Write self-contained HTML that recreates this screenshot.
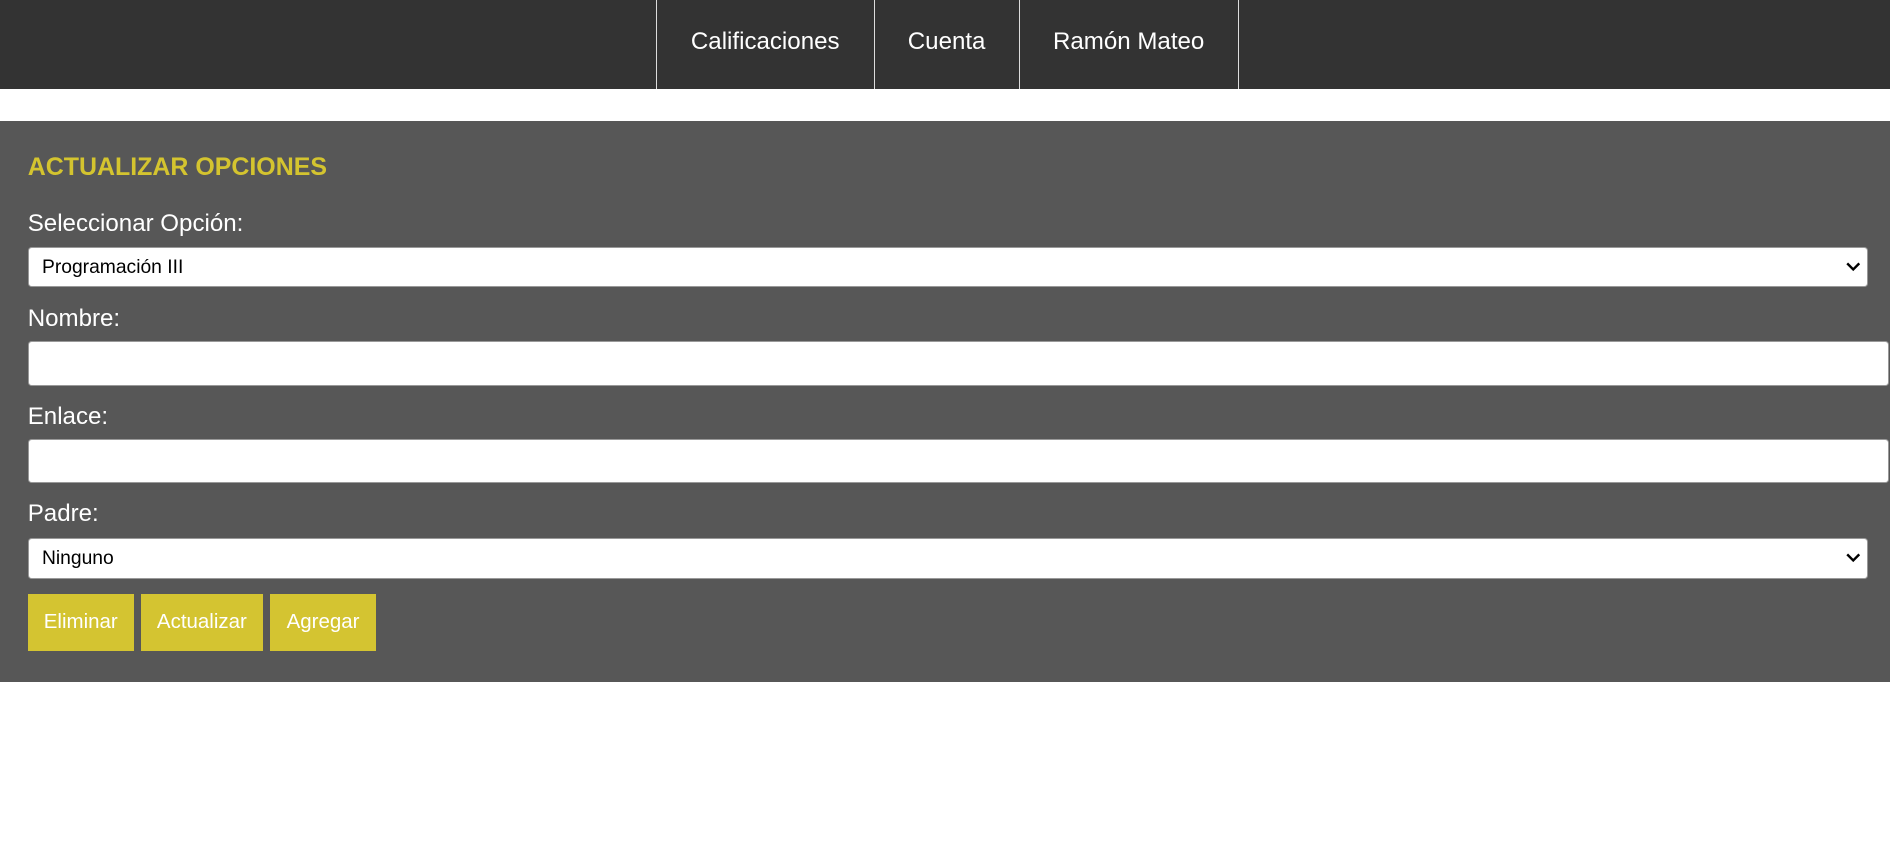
<!DOCTYPE html>
<html><head><meta charset="utf-8"><style>
html,body{margin:0;padding:0;background:#fff;}
body{zoom:1.2054;width:1568px;height:710px;overflow:hidden;font-family:"Liberation Sans",Arial,sans-serif;position:relative;}
.nav{position:absolute;left:0;top:0;width:1568px;height:74px;background:#333;}
.nav .it{position:absolute;top:0;height:74px;line-height:70px;color:#fff;font-size:20px;text-align:center;border-left:1px solid #ddd;}
.sec{position:absolute;left:0;top:100px;width:1568px;height:466px;background:#575757;}
h2{position:absolute;left:23px;top:127px;margin:0;font-size:20.7px;color:#d4c42f;font-weight:bold;}
.lbl{position:absolute;left:23px;color:#fff;font-size:20px;}
.sel,.inp{position:absolute;left:23px;background:#fff;border-radius:3px;box-sizing:border-box;border:1px solid #999;}
.sel{width:1527px;font-size:16px;color:#000;padding-left:11px;}
.inp{width:1544px;}
.chev{position:absolute;right:6px;top:50%;margin-top:-5px;}
.btn{position:absolute;top:493px;height:47px;line-height:47px;background:#d4c431;color:#fff;font-size:17px;text-align:center;}
</style></head><body>
<div class="nav">
<div class="it" style="left:544px;width:180px">Calificaciones</div>
<div class="it" style="left:725px;width:119px">Cuenta</div>
<div class="it" style="left:845px;width:181px">Ramón Mateo</div>
<div class="it" style="left:1027px;width:0"></div>
</div>
<div class="sec"></div>
<h2>ACTUALIZAR OPCIONES</h2>
<div class="lbl" style="top:174px">Seleccionar Opción:</div>
<div class="sel" style="top:205px;height:33px;line-height:33px">Programación III<svg class="chev" width="12" height="9" viewBox="0 0 12 9"><path d="M1 2 L6 7 L11 2" fill="none" stroke="#000" stroke-width="2"/></svg></div>
<div class="lbl" style="top:253px">Nombre:</div>
<div class="inp" style="top:283px;height:37px"></div>
<div class="lbl" style="top:334px">Enlace:</div>
<div class="inp" style="top:364px;height:37px"></div>
<div class="lbl" style="top:415px">Padre:</div>
<div class="sel" style="top:446px;height:34px;line-height:34px">Ninguno<svg class="chev" width="12" height="9" viewBox="0 0 12 9"><path d="M1 2 L6 7 L11 2" fill="none" stroke="#000" stroke-width="2"/></svg></div>
<div class="btn" style="left:23px;width:88px">Eliminar</div>
<div class="btn" style="left:117px;width:101px">Actualizar</div>
<div class="btn" style="left:224px;width:88px">Agregar</div>
</body></html>
